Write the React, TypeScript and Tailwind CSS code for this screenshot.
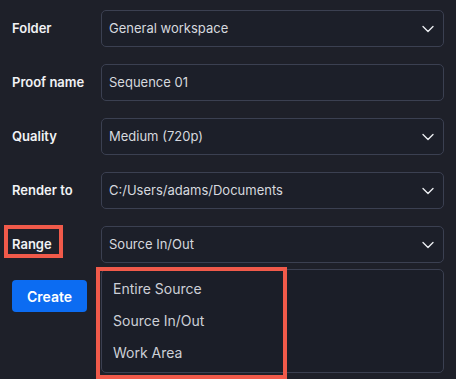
import { ChevronDown } from "lucide-react";

type Row = { label: string; value: string; select: boolean; marked?: boolean };

const rows: Row[] = [
  { label: "Folder", value: "General workspace", select: true },
  { label: "Proof name", value: "Sequence 01", select: false },
  { label: "Quality", value: "Medium (720p)", select: true },
  { label: "Render to", value: "C:/Users/adams/Documents", select: true },
  { label: "Range", value: "Source In/Out", select: true, marked: true },
];

const options = ["Entire Source", "Source In/Out", "Work Area"];

function FieldRow({ row }: { row: Row }) {
  return (
    <div className="flex items-center">
      <div className="relative w-[89px] shrink-0 text-[13px] font-semibold text-[#f1f2f5]">
        {row.label}
        {row.marked && (
          <div className="absolute left-[-8px] top-[-10px] h-[33px] w-[59px] border-4 border-[#f15a4a]" />
        )}
      </div>
      <div className="flex h-[37px] flex-1 items-center justify-between rounded-[5px] border border-[#3b4051] bg-[#1c1f29] pl-[7px] pr-[5px] text-[13px] text-[#d6d9df]">
        <span>{row.value}</span>
        {row.select && <ChevronDown size={20} strokeWidth={1.6} className="text-[#eceef2]" />}
      </div>
    </div>
  );
}

export default function App() {
  return (
    <div
      className="h-[379px] w-[456px] overflow-hidden bg-[#1e2029] pl-3 pr-3 pt-[10px]"
      style={{ fontFamily: "Inter, 'Noto Sans', sans-serif" }}
    >
      <div className="flex flex-col gap-[17px]">
        {rows.map((r) => (
          <FieldRow key={r.label} row={r} />
        ))}
      </div>
      <div className="mt-[6px] flex items-start">
        <div className="w-[89px] shrink-0 pt-[11px]">
          <button className="h-[32px] w-[75px] rounded-[4px] bg-[#0c6cf2] text-[14px] font-semibold text-white">
            Create
          </button>
        </div>
        <div className="relative h-[104px] flex-1 rounded-[5px] border border-[#3b4051] bg-[#1b1e28]">
          <div className="flex flex-col gap-[11px] pl-[11px] pt-[8px] text-[14px] leading-[21px] text-[#cdd0d7]">
            {options.map((o) => (
              <div key={o}>{o}</div>
            ))}
          </div>
          <div className="absolute left-[-6px] top-[-3px] h-[112px] w-[191px] border-4 border-[#f15a4a]" />
        </div>
      </div>
    </div>
  );
}
